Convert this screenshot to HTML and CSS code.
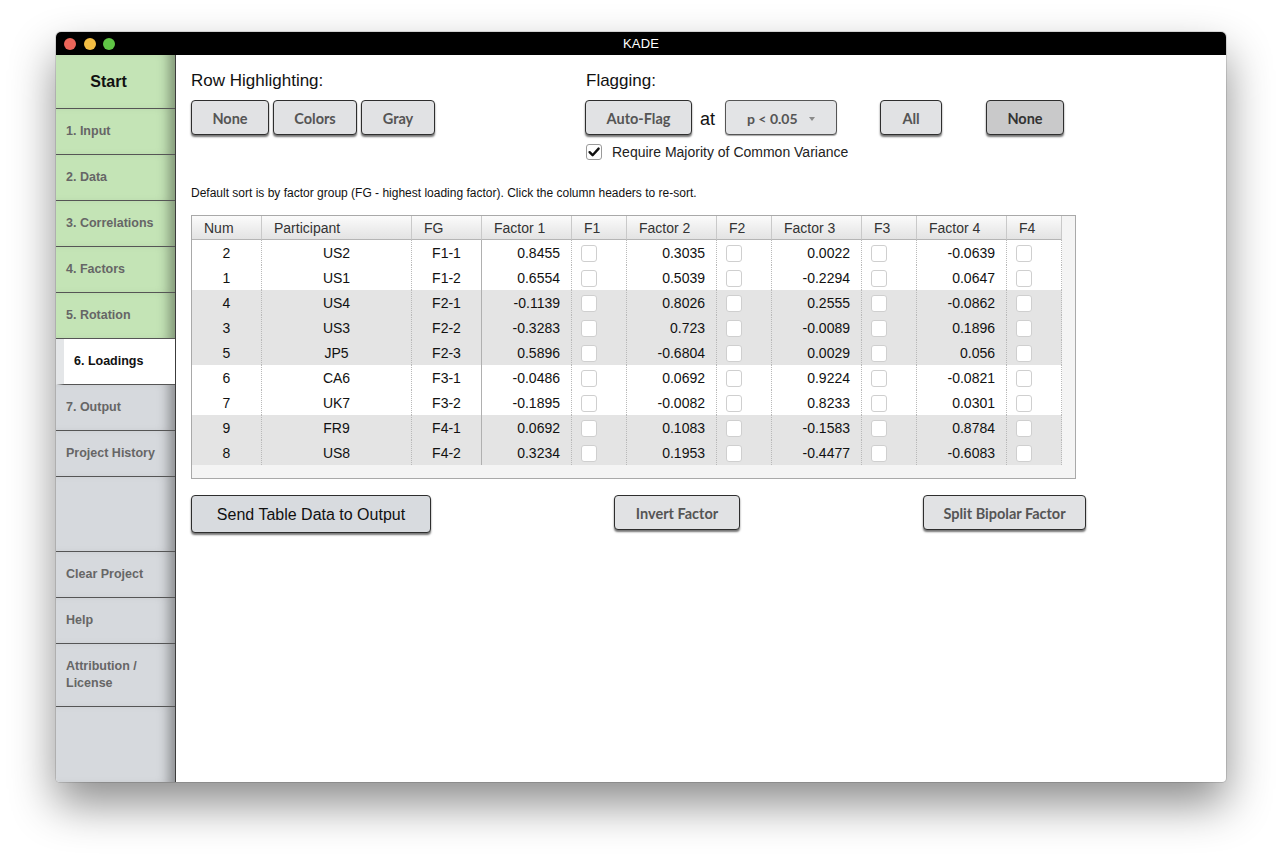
FILE: index.html
```html
<!DOCTYPE html>
<html lang="en">
<head>
<meta charset="utf-8">
<title>KADE</title>
<link rel="stylesheet" href="styles.css">
</head>
<body>
<div class="window">
  <header class="titlebar">
    <div class="lights">
      <span class="light red"></span><span class="light yellow"></span><span class="light green"></span>
    </div>
    <div class="title">KADE</div>
    <div></div>
  </header>
  <div class="win-body">
    <nav class="sidebar">
      <div class="nav-item start done">Start</div>
      <div class="nav-item done">1. Input</div>
      <div class="nav-item done">2. Data</div>
      <div class="nav-item done">3. Correlations</div>
      <div class="nav-item done">4. Factors</div>
      <div class="nav-item done">5. Rotation</div>
      <div class="nav-item active">6. Loadings</div>
      <div class="nav-item">7. Output</div>
      <div class="nav-item">Project History</div>
      <div class="nav-spacer"></div>
      <div class="nav-item">Clear Project</div>
      <div class="nav-item">Help</div>
      <div class="nav-item tall">Attribution /<br>License</div>
      <div class="nav-fill"></div>
    </nav>
    <main class="content">
      <div class="controls">
        <section class="group highlight">
          <h2 class="group-label">Row Highlighting:</h2>
          <div class="btn-row">
            <button class="btn w-none">None</button>
            <button class="btn w-colors">Colors</button>
            <button class="btn w-gray">Gray</button>
          </div>
        </section>
        <section class="group flagging">
          <h2 class="group-label">Flagging:</h2>
          <div class="btn-row">
            <button class="btn w-auto">Auto-Flag</button>
            <span class="at">at</span>
            <div class="select"><span>p &lt; 0.05</span><span class="caret"></span></div>
            <button class="btn w-all">All</button>
            <button class="btn w-none2 pressed">None</button>
          </div>
          <label class="check-row">
            <span class="checkbox checked">
              <svg viewBox="0 0 16 16" width="16" height="16"><path d="M3.6 8.2 L6.6 11.2 L12.6 4.6" fill="none" stroke="#111" stroke-width="2.4" stroke-linecap="round" stroke-linejoin="round"/></svg>
            </span>
            <span>Require Majority of Common Variance</span>
          </label>
        </section>
      </div>

      <p class="hint">Default sort is by factor group (FG - highest loading factor). Click the column headers to re-sort.</p>

      <div class="grid">
        <table class="loadings">
          <colgroup>
            <col class="c-num"><col class="c-part"><col class="c-fg">
            <col class="c-fac"><col class="c-flag">
            <col class="c-fac"><col class="c-flag">
            <col class="c-fac"><col class="c-flag">
            <col class="c-fac"><col class="c-flag">
          </colgroup>
          <thead>
            <tr>
              <th>Num</th><th>Participant</th><th>FG</th>
              <th>Factor 1</th><th>F1</th><th>Factor 2</th><th>F2</th>
              <th>Factor 3</th><th>F3</th><th>Factor 4</th><th>F4</th>
            </tr>
          </thead>
          <tbody>
            <tr><td class="ctr">2</td><td class="ctr">US2</td><td class="ctr fg">F1-1</td><td class="num">0.8455</td><td><span class="box"></span></td><td class="num">0.3035</td><td><span class="box"></span></td><td class="num">0.0022</td><td><span class="box"></span></td><td class="num">-0.0639</td><td><span class="box"></span></td></tr>
            <tr><td class="ctr">1</td><td class="ctr">US1</td><td class="ctr fg">F1-2</td><td class="num">0.6554</td><td><span class="box"></span></td><td class="num">0.5039</td><td><span class="box"></span></td><td class="num">-0.2294</td><td><span class="box"></span></td><td class="num">0.0647</td><td><span class="box"></span></td></tr>
            <tr class="shade"><td class="ctr">4</td><td class="ctr">US4</td><td class="ctr fg">F2-1</td><td class="num">-0.1139</td><td><span class="box"></span></td><td class="num">0.8026</td><td><span class="box"></span></td><td class="num">0.2555</td><td><span class="box"></span></td><td class="num">-0.0862</td><td><span class="box"></span></td></tr>
            <tr class="shade"><td class="ctr">3</td><td class="ctr">US3</td><td class="ctr fg">F2-2</td><td class="num">-0.3283</td><td><span class="box"></span></td><td class="num">0.723</td><td><span class="box"></span></td><td class="num">-0.0089</td><td><span class="box"></span></td><td class="num">0.1896</td><td><span class="box"></span></td></tr>
            <tr class="shade"><td class="ctr">5</td><td class="ctr">JP5</td><td class="ctr fg">F2-3</td><td class="num">0.5896</td><td><span class="box"></span></td><td class="num">-0.6804</td><td><span class="box"></span></td><td class="num">0.0029</td><td><span class="box"></span></td><td class="num">0.056</td><td><span class="box"></span></td></tr>
            <tr><td class="ctr">6</td><td class="ctr">CA6</td><td class="ctr fg">F3-1</td><td class="num">-0.0486</td><td><span class="box"></span></td><td class="num">0.0692</td><td><span class="box"></span></td><td class="num">0.9224</td><td><span class="box"></span></td><td class="num">-0.0821</td><td><span class="box"></span></td></tr>
            <tr><td class="ctr">7</td><td class="ctr">UK7</td><td class="ctr fg">F3-2</td><td class="num">-0.1895</td><td><span class="box"></span></td><td class="num">-0.0082</td><td><span class="box"></span></td><td class="num">0.8233</td><td><span class="box"></span></td><td class="num">0.0301</td><td><span class="box"></span></td></tr>
            <tr class="shade"><td class="ctr">9</td><td class="ctr">FR9</td><td class="ctr fg">F4-1</td><td class="num">0.0692</td><td><span class="box"></span></td><td class="num">0.1083</td><td><span class="box"></span></td><td class="num">-0.1583</td><td><span class="box"></span></td><td class="num">0.8784</td><td><span class="box"></span></td></tr>
            <tr class="shade"><td class="ctr">8</td><td class="ctr">US8</td><td class="ctr fg">F4-2</td><td class="num">0.3234</td><td><span class="box"></span></td><td class="num">0.1953</td><td><span class="box"></span></td><td class="num">-0.4477</td><td><span class="box"></span></td><td class="num">-0.6083</td><td><span class="box"></span></td></tr>
          </tbody>
        </table>
      </div>

      <div class="actions">
        <button class="btn btn-send">Send Table Data to Output</button>
        <button class="btn w-invert">Invert Factor</button>
        <button class="btn w-split">Split Bipolar Factor</button>
      </div>
    </main>
  </div>
</div>
</body>
</html>
```

FILE: styles.css
```css
* { box-sizing: border-box; }

html, body {
  margin: 0;
  padding: 0;
  background: #ffffff;
}

body {
  padding: 32px 0 80px 56px;
  min-height: 862px;
  font-family: "Liberation Sans", Arial, Helvetica, sans-serif;
  color: #111;
}

.window {
  width: 1170px;
  height: 750px;
  border-radius: 5px 5px 4px 4px;
  overflow: hidden;
  background: #fff;
  box-shadow: 0 22px 45px rgba(0, 0, 0, 0.45), 0 0 0 1px rgba(0, 0, 0, 0.12);
  display: flex;
  flex-direction: column;
}

/* Title bar */
.titlebar {
  height: 23px;
  background: #000;
  display: grid;
  grid-template-columns: 1fr auto 1fr;
  align-items: center;
  flex: none;
}
.lights {
  display: flex;
  gap: 7.5px;
  padding-left: 8px;
}
.light {
  width: 12px;
  height: 12px;
  border-radius: 50%;
  display: block;
}
.light.red { background: #ec6559; }
.light.yellow { background: #f3bd43; }
.light.green { background: #5fc545; }
.title {
  color: #fff;
  font-size: 13px;
  letter-spacing: 0.2px;
}

.win-body {
  flex: 1;
  display: flex;
  min-height: 0;
}

/* Sidebar */
.sidebar {
  width: 120px;
  flex: none;
  display: flex;
  flex-direction: column;
  border-right: 1px solid #3c3c3c;
  background: #d6d9dd;
}
.nav-item {
  height: 46px;
  flex: none;
  display: flex;
  align-items: center;
  padding-left: 10px;
  border-bottom: 1px solid #555;
  background: #d6d9dd;
  color: #666;
  font-weight: bold;
  font-size: 12.5px;
  line-height: 17px;
  box-shadow: inset -14px 0 12px -8px rgba(0, 0, 0, 0.35);
}
.nav-item.done { background: #c4e4b6; }
.nav-item.start {
  height: 54px;
  justify-content: center;
  padding-left: 0;
  padding-right: 14px;
  color: #111;
  font-size: 16px;
}
.nav-item.active {
  background: #fff;
  color: #111;
  border-left: 8px solid #e4e6e8;
  padding-left: 10px;
  box-shadow: none;
}
.nav-item.tall { height: 63px; }
.nav-spacer {
  height: 75px;
  flex: none;
  border-bottom: 1px solid #555;
  box-shadow: inset -14px 0 12px -8px rgba(0, 0, 0, 0.35);
}
.nav-fill {
  flex: 1;
  box-shadow: inset -14px 0 12px -8px rgba(0, 0, 0, 0.35);
}

/* Content */
.content {
  flex: 1;
  padding: 14px 15px 0 15px;
}

.controls {
  display: flex;
}
.group.highlight { width: 395px; }

.group-label {
  margin: 0;
  font-weight: normal;
  font-size: 17px;
  line-height: 24px;
  color: #111;
}

.btn-row {
  display: flex;
  align-items: center;
  margin-top: 7px;
}

.btn {
  height: 35px;
  border: 1px solid #2e2e2e;
  border-radius: 4px;
  background: #e1e2e4;
  box-shadow: 0 2px 2px rgba(0, 0, 0, 0.55);
  font-family: Lato, "Liberation Sans", sans-serif;
  font-weight: bold;
  font-size: 14.5px;
  color: #555;
  padding: 2px 0 0 0;
  text-align: center;
  cursor: pointer;
}
.highlight .btn + .btn { margin-left: 4px; }
.w-none { width: 78px; }
.w-colors { width: 84px; }
.w-gray { width: 74px; }
.w-auto { width: 107px; margin-left: -1px; }
.w-all { width: 62px; margin-left: 43px; }
.w-none2 { width: 78px; margin-left: 44px; }
.btn.pressed { background: #c9c9ca; color: #333; }

.at {
  font-size: 18px;
  margin: 0 10px 0 8px;
  padding-top: 3px;
  color: #111;
}

.select {
  width: 112px;
  height: 35px;
  border: 1px solid #555;
  border-radius: 4px;
  background: #e3e4e6;
  box-shadow: 0 1px 1px rgba(0, 0, 0, 0.35);
  display: flex;
  align-items: center;
  padding: 2px 0 0 21px;
  gap: 11px;
  font-family: Lato, "Liberation Sans", sans-serif;
  font-weight: bold;
  font-size: 14px;
  color: #555;
}
.caret {
  width: 0;
  height: 0;
  border-left: 3.5px solid transparent;
  border-right: 3.5px solid transparent;
  border-top: 4px solid #8a8a8a;
}

.check-row {
  display: flex;
  align-items: center;
  margin-top: 9px;
  margin-left: 0;
  font-size: 14px;
  color: #222;
}
.checkbox {
  width: 16px;
  height: 16px;
  border: 1px solid #9a9a9a;
  border-radius: 3px;
  background: #fff;
  margin-right: 10px;
  display: block;
  position: relative;
}
.checkbox svg {
  position: absolute;
  left: -1px;
  top: -1px;
}

.hint {
  margin: 25px 0 0 0;
  font-size: 12px;
  line-height: 16px;
  color: #111;
}

/* Table */
.grid {
  margin-top: 14px;
  width: 885px;
  height: 264px;
  border: 1px solid #a9a9a9;
  background: #f4f4f4;
  overflow: hidden;
}
.loadings {
  width: 870px;
  table-layout: fixed;
  border-collapse: separate;
  border-spacing: 0;
  font-size: 14px;
}
.c-num { width: 70px; }
.c-part { width: 150px; }
.c-fg { width: 70px; }
.c-fac { width: 90px; }
.c-flag { width: 55px; }

.loadings th {
  height: 24px;
  padding: 0 0 0 12px;
  text-align: left;
  font-weight: normal;
  color: #333;
  background: linear-gradient(#fbfbfb, #e3e3e3);
  border-bottom: 1px solid #b5b5b5;
  border-right: 1px solid #c9c9c9;
}
.loadings td {
  height: 25px;
  padding: 0;
  background: #fff;
  border-right: 1px dotted #b9b9b9;
  color: #111;
}
.loadings tr.shade td { background: #e4e4e4; }
.loadings td.ctr { text-align: center; }
.loadings td.fg { border-right: 1px solid #b0b0b0; }
.loadings td.num {
  text-align: right;
  padding-right: 11px;
}
.box {
  display: block;
  width: 16px;
  height: 17px;
  margin: 1px 0 0 9px;
  border: 1px solid #cfcfcf;
  border-radius: 3px;
  background: #fff;
}

/* Actions */
.actions {
  margin-top: 16px;
  width: 895px;
  display: flex;
  justify-content: space-between;
  align-items: flex-start;
}
.btn-send {
  width: 240px;
  height: 38px;
  background: #d8dbdf;
  font-family: "Liberation Sans", Arial, sans-serif;
  font-weight: normal;
  font-size: 16px;
  color: #111;
}
.w-invert { width: 126px; }
.w-split { width: 163px; }
```
